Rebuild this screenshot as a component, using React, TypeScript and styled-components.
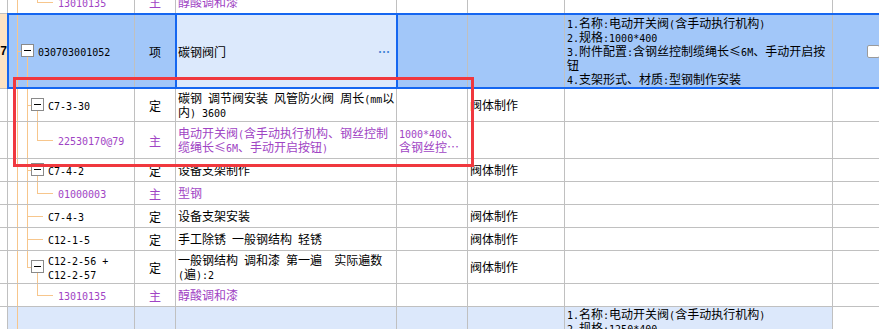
import React from 'react';
import styled, { createGlobalStyle } from 'styled-components';

const GlobalStyle = createGlobalStyle`
  html, body { margin: 0; padding: 0; background: #fff; }
  body {
    font-family: "Noto Sans CJK SC", "Liberation Sans", sans-serif;
    font-size: 12px;
    color: #000;
  }
`;

const COLS = '8px 127px 41px 221px 71px 97px 268px 80px';
const GRID = '#c0c0c0';
const TREE = '#f7c68c';
const PURPLE = '#a044c4';
const BLUE = '#1566f0';

type Part = 'full' | 'top' | 'bottom';
type Tone = 'plain' | 'selected' | 'next';

interface RowData {
  h: number;
  tone: Tone;
  num?: string;
  depth: number;
  node: 'box' | 'leaf' | 'none';
  guides: [number, Part][];
  code: string[];
  kind: string;
  main?: boolean;
  name: string[];
  spec?: string[];
  work?: string;
  desc?: string[];
  check?: boolean;
}

const DESC_A = [
  '1.名称:电动开关阀(含手动执行机构)',
  '2.规格:1000*400',
  '3.附件配置:含钢丝控制缆绳长≤6M、手动开启按',
  '钮',
  '4.支架形式、材质:型钢制作安装',
];
const DESC_B = [
  '1.名称:电动开关阀(含手动执行机构)',
  '2.规格:1250*400',
  '3.附件配置:含钢丝控制缆绳长≤6M、手动开启按',
  '钮',
  '4.支架形式、材质:型钢制作安装',
];

const ROWS: RowData[] = [
  { h: 24, tone: 'plain', depth: 2, node: 'leaf', guides: [[0, 'full'], [2, 'top']], code: ['13010135'], kind: '主', main: true, name: ['醇酸调和漆'] },
  { h: 75, tone: 'selected', num: '7', depth: 0, node: 'box', guides: [[0, 'full'], [1, 'bottom']], code: ['030703001052'], kind: '项', name: ['碳钢阀门'], desc: DESC_A, check: true },
  { h: 33, tone: 'plain', depth: 1, node: 'box', guides: [[0, 'full'], [1, 'full'], [2, 'bottom']], code: ['C7-3-30'], kind: '定', name: ['碳钢 调节阀安装 风管防火阀 周长(mm以', '内) 3600'], work: '阀体制作' },
  { h: 37, tone: 'plain', depth: 2, node: 'leaf', guides: [[0, 'full'], [1, 'full'], [2, 'top']], code: ['22530170@79'], kind: '主', main: true, name: ['电动开关阀(含手动执行机构、钢丝控制', '缆绳长≤6M、手动开启按钮)'], spec: ['1000*400、', '含钢丝控…'] },
  { h: 23, tone: 'plain', depth: 1, node: 'box', guides: [[0, 'full'], [1, 'full'], [2, 'bottom']], code: ['C7-4-2'], kind: '定', name: ['设备支架制作'], work: '阀体制作' },
  { h: 23, tone: 'plain', depth: 2, node: 'leaf', guides: [[0, 'full'], [1, 'full'], [2, 'top']], code: ['01000003'], kind: '主', main: true, name: ['型钢'] },
  { h: 23, tone: 'plain', depth: 1, node: 'leaf', guides: [[0, 'full'], [1, 'full']], code: ['C7-4-3'], kind: '定', name: ['设备支架安装'], work: '阀体制作' },
  { h: 23, tone: 'plain', depth: 1, node: 'leaf', guides: [[0, 'full'], [1, 'full']], code: ['C12-1-5'], kind: '定', name: ['手工除锈 一般钢结构 轻锈'], work: '阀体制作' },
  { h: 33, tone: 'plain', depth: 1, node: 'box', guides: [[0, 'full'], [1, 'top'], [2, 'bottom']], code: ['C12-2-56 +', 'C12-2-57'], kind: '定', name: ['一般钢结构 调和漆 第一遍  实际遍数', '(遍):2'], work: '阀体制作' },
  { h: 23, tone: 'plain', depth: 2, node: 'leaf', guides: [[0, 'full'], [2, 'top']], code: ['13010135'], kind: '主', main: true, name: ['醇酸调和漆'] },
  { h: 75, tone: 'next', depth: 0, node: 'none', guides: [[0, 'full']], code: [], kind: '', name: [], desc: DESC_B },
];

const Screen = styled.div`
  position: relative;
  width: 879px;
  height: 329px;
  overflow: hidden;
  background: #fff;
`;

const Table = styled.div`
  margin-top: -10px;
  width: 913px;
`;

const Row = styled.div<{ $h: number }>`
  position: relative;
  display: grid;
  grid-template-columns: ${COLS};
  height: ${p => p.$h}px;
  box-sizing: border-box;
  border-bottom: 1px solid ${GRID};
`;

const Cell = styled.div<{ $bg?: string }>`
  position: relative;
  box-sizing: border-box;
  min-width: 0;
  display: flex;
  align-items: center;
  border-right: 1px solid ${GRID};
  background: ${p => p.$bg ?? 'transparent'};
  overflow: hidden;
`;

const NumCell = styled(Cell)`
  justify-content: flex-end;
  font-family: "Liberation Sans", sans-serif;
  font-weight: bold;
  font-size: 12px;
`;

const TreeCell = styled(Cell)`
  overflow: visible;
`;

const TypeCell = styled(Cell)<{ $color: string }>`
  justify-content: center;
  color: ${p => p.$color};
`;

const TextCell = styled(Cell)<{ $color: string; $top?: boolean }>`
  flex-direction: column;
  align-items: flex-start;
  justify-content: ${p => (p.$top ? 'flex-start' : 'center')};
  padding: 0 2px;
  color: ${p => p.$color};
  line-height: 14px;
  white-space: pre;
`;

const FocusCell = styled(Cell)`
  justify-content: space-between;
  padding: 0 7px 0 2px;
  white-space: pre;
`;

const MoreDots = styled.span`
  color: #3d7fd4;
  font-weight: bold;
  letter-spacing: -1px;
`;

const CheckCell = styled(Cell)`
  justify-content: center;
  border-right: none;
`;

const CheckBox = styled.span`
  width: 13px;
  height: 13px;
  box-sizing: border-box;
  border: 1px solid #9b9b9b;
  border-radius: 2px;
  background: #fff;
`;

const Line = styled.span`
  display: block;
  height: 14px;
`;

const Latin = styled.span`
  font-family: "DejaVu Sans Mono", "Liberation Mono", monospace;
  font-size: 10px;
`;

const Guide = styled.span<{ $x: number; $part: Part }>`
  position: absolute;
  left: ${p => p.$x}px;
  width: 1px;
  top: ${p => (p.$part === 'bottom' ? '50%' : '0')};
  bottom: ${p => (p.$part === 'top' ? '50%' : '0')};
  background: ${TREE};
`;

const Stub = styled.span<{ $x: number; $w: number }>`
  position: absolute;
  top: 50%;
  left: ${p => p.$x}px;
  width: ${p => p.$w}px;
  height: 1px;
  background: ${TREE};
`;

const ExpandBox = styled.span<{ $x: number }>`
  position: absolute;
  left: ${p => p.$x}px;
  top: 50%;
  margin-top: -7px;
  width: 13px;
  height: 13px;
  box-sizing: border-box;
  border: 1px solid #8a8a8a;
  background: #fff;
  &::after {
    content: '';
    position: absolute;
    left: 2px;
    right: 2px;
    top: 5px;
    height: 1px;
    background: #000;
  }
`;

const TreeLabel = styled.div<{ $indent: number; $color: string }>`
  position: relative;
  margin-left: ${p => p.$indent}px;
  color: ${p => p.$color};
  line-height: 14px;
  white-space: pre;
`;

const RowFrame = styled.div`
  position: absolute;
  left: 7px;
  right: 0;
  top: -1px;
  bottom: -1px;
  border: 2px solid ${BLUE};
  pointer-events: none;
`;

const FocusFrame = styled.div`
  position: absolute;
  left: 175px;
  width: 223px;
  top: -1px;
  bottom: -1px;
  box-sizing: border-box;
  border: 2px solid ${BLUE};
  pointer-events: none;
`;

const Highlight = styled.div`
  position: absolute;
  left: 13px;
  top: 77px;
  width: 461px;
  height: 90px;
  box-sizing: border-box;
  border: 3px solid #f0383e;
  pointer-events: none;
  z-index: 5;
`;

const guideX = (level: number) => 9 + 10 * level;

/* Mimic the half-width Latin glyphs of the original by rendering ASCII runs in a 6px-pitch mono face */
function Txt({ s }: { s: string }) {
  const parts = s.split(/([\x20-\x7E]+)/).filter(Boolean);
  return (
    <>
      {parts.map((p, i) =>
        /^[\x20-\x7E]+$/.test(p) ? <Latin key={i}>{p}</Latin> : <React.Fragment key={i}>{p}</React.Fragment>
      )}
    </>
  );
}

function Tree({ r }: { r: RowData }) {
  const x = guideX(r.depth);
  const color = r.main ? PURPLE : '#000';
  return (
    <>
      {r.guides.map(([lv, part], i) => (
        <Guide key={i} $x={guideX(lv)} $part={part} />
      ))}
      {r.node === 'box' && <Stub $x={x} $w={4} />}
      {r.node === 'box' && <ExpandBox $x={x + 4} />}
      {r.node === 'leaf' && <Stub $x={x} $w={16} />}
      {r.code.length > 0 && (
        <TreeLabel $indent={x + 21} $color={color}>
          {r.code.map((c, i) => (
            <Line key={i}>
              <Txt s={c} />
            </Line>
          ))}
        </TreeLabel>
      )}
    </>
  );
}

function Lines({ items }: { items?: string[] }) {
  return (
    <>
      {(items ?? []).map((t, i) => (
        <Line key={i}>
          <Txt s={t} />
        </Line>
      ))}
    </>
  );
}

function DataRow({ r }: { r: RowData }) {
  const sel = r.tone === 'selected';
  const next = r.tone === 'next';
  const base = sel ? '#a2c7f9' : next ? '#dce8fb' : undefined;
  const numBg = sel ? '#fde3c3' : undefined;
  const color = r.main ? PURPLE : '#000';
  return (
    <Row $h={r.h}>
      <NumCell $bg={numBg}>{r.num}</NumCell>
      <TreeCell $bg={base}>
        <Tree r={r} />
      </TreeCell>
      <TypeCell $bg={base} $color={color}>{r.kind}</TypeCell>
      {sel ? (
        <FocusCell $bg="#dce9fc">
          <span>{r.name[0]}</span>
          <MoreDots>…</MoreDots>
        </FocusCell>
      ) : (
        <TextCell $bg={base} $color={color}>
          <Lines items={r.name} />
        </TextCell>
      )}
      <TextCell $bg={base} $color={PURPLE}>
        <Lines items={r.spec} />
      </TextCell>
      <TextCell $bg={base} $color="#000">
        {r.work && <Line>{r.work}</Line>}
      </TextCell>
      <TextCell $bg={base} $color="#000" $top={next}>
        <Lines items={r.desc} />
      </TextCell>
      <CheckCell $bg={sel ? base : undefined}>{r.check && <CheckBox />}</CheckCell>
      {sel && <RowFrame />}
      {sel && <FocusFrame />}
    </Row>
  );
}

export default function App() {
  return (
    <>
      <GlobalStyle />
      <Screen>
        <Table>
          {ROWS.map((r, i) => (
            <DataRow key={i} r={r} />
          ))}
        </Table>
        <Highlight />
      </Screen>
    </>
  );
}
